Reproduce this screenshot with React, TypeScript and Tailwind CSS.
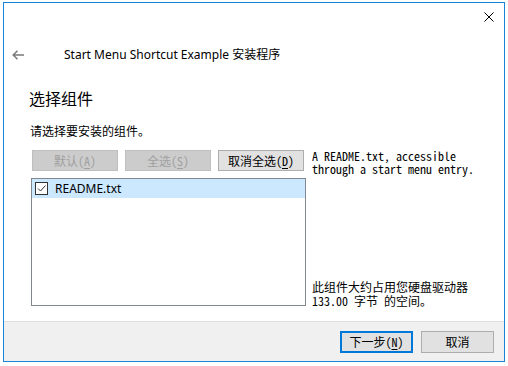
import React from "react";

function Btn({
  label,
  mn,
  disabled,
}: {
  label: string;
  mn: string;
  disabled?: boolean;
}) {
  return (
    <div
      className={
        "w-[86px] h-[21px] flex items-center justify-center border text-[12px] leading-none font-['Noto_Sans_Mono_CJK_SC','Noto_Sans_CJK_SC',monospace] " +
        (disabled
          ? "bg-[#cccccc] border-[#bfbfbf] text-[#a0a0a0]"
          : "bg-[#e1e1e1] border-[#adadad] text-black")
      }
    >
      <span>
        {label}(<span className="underline underline-offset-2">{mn}</span>)
      </span>
    </div>
  );
}

export default function App() {
  return (
    <div className="w-[508px] h-[366px] bg-white pl-[3px] pt-[2px]">
      <div className="w-[502px] h-[360px] border border-[#1883d7] bg-white flex flex-col">
        {/* top bar with close */}
        <div className="h-[30px] flex justify-end pt-[9px] pr-[10px]">
          <svg width="10" height="10" viewBox="0 0 10 10">
            <path d="M0.5 0.5 L9.5 9.5 M9.5 0.5 L0.5 9.5" stroke="#000" strokeWidth="1" fill="none" />
          </svg>
        </div>
        {/* header */}
        <div className="h-[44px] flex items-center pl-[8px]">
          <svg width="12" height="10" viewBox="0 0 12 10">
            <path d="M1 5 H12 M5.5 0.8 L1.2 5 L5.5 9.2" stroke="#7a7a7a" strokeWidth="1.5" fill="none" />
          </svg>
          <span className="ml-[40px] text-[12px] text-black font-['Noto_Sans','Noto_Sans_CJK_SC',sans-serif] leading-[16px]">
            Start Menu Shortcut Example 安装程序
          </span>
        </div>
        {/* heading */}
        <div className="mt-[10px] pl-[25px] text-[16px] leading-[22px] text-black font-['Noto_Sans_CJK_SC',sans-serif]">
          选择组件
        </div>
        <div className="mt-[14px] pl-[26px] text-[12px] leading-[16px] text-black font-['Noto_Sans_CJK_SC',sans-serif]">
          请选择要安装的组件。
        </div>
        {/* content */}
        <div className="mt-[11px] pl-[27px] flex h-[157px]">
          <div className="w-[275px] flex flex-col">
            <div className="h-[21px] flex gap-[7px] pl-[1px]">
              <Btn label="默认" mn="A" disabled />
              <Btn label="全选" mn="S" disabled />
              <Btn label="取消全选" mn="D" />
            </div>
            <div className="mt-[7px] h-[128px] border border-[#828790] bg-white">
              <div className="h-[19px] bg-[#cce8ff] flex items-center">
                <div className="ml-[3px] w-[13px] h-[13px] border border-[#333333] bg-white flex items-center justify-center">
                  <svg width="11" height="11" viewBox="0 0 11 11">
                    <path d="M2 5.5 L4.5 8 L9.5 2.5" stroke="#333" strokeWidth="1" fill="none" />
                  </svg>
                </div>
                <span className="ml-[7px] text-[12px] leading-[16px] text-black font-['Noto_Sans',sans-serif]">
                  README.txt
                </span>
              </div>
            </div>
          </div>
          <div className="ml-[6px] flex-1 flex flex-col justify-between text-[12px] leading-[13px] text-black font-['Noto_Sans_Mono_CJK_SC','Liberation_Mono',monospace]">
            <div className="-mt-[1px]">
              <div>A README.txt, accessible</div>
              <div>through a start menu entry.</div>
            </div>
            <div className="leading-[14px] mb-[-1px]">
              <div>此组件大约占用您硬盘驱动器</div>
              <div>133.00 字节 的空间。</div>
            </div>
          </div>
        </div>
        <div className="flex-1" />
        {/* footer */}
        <div className="h-[40px] border-t border-[#dfdfdf] bg-[#f0f0f0] flex justify-end items-start pt-[9px] pr-[10px] gap-[8px]">
          <div className="w-[73px] h-[22px] border-2 border-[#0078d7] bg-[#e1e1e1] flex items-center justify-center text-[12px] leading-none text-black font-['Noto_Sans_Mono_CJK_SC','Noto_Sans_CJK_SC',monospace]">
            <span>
              下一步(<span className="underline underline-offset-2">N</span>)
            </span>
          </div>
          <div className="w-[73px] h-[22px] border border-[#adadad] bg-[#e1e1e1] flex items-center justify-center text-[12px] leading-none text-black font-['Noto_Sans_CJK_SC',sans-serif]">
            取消
          </div>
        </div>
      </div>
    </div>
  );
}
